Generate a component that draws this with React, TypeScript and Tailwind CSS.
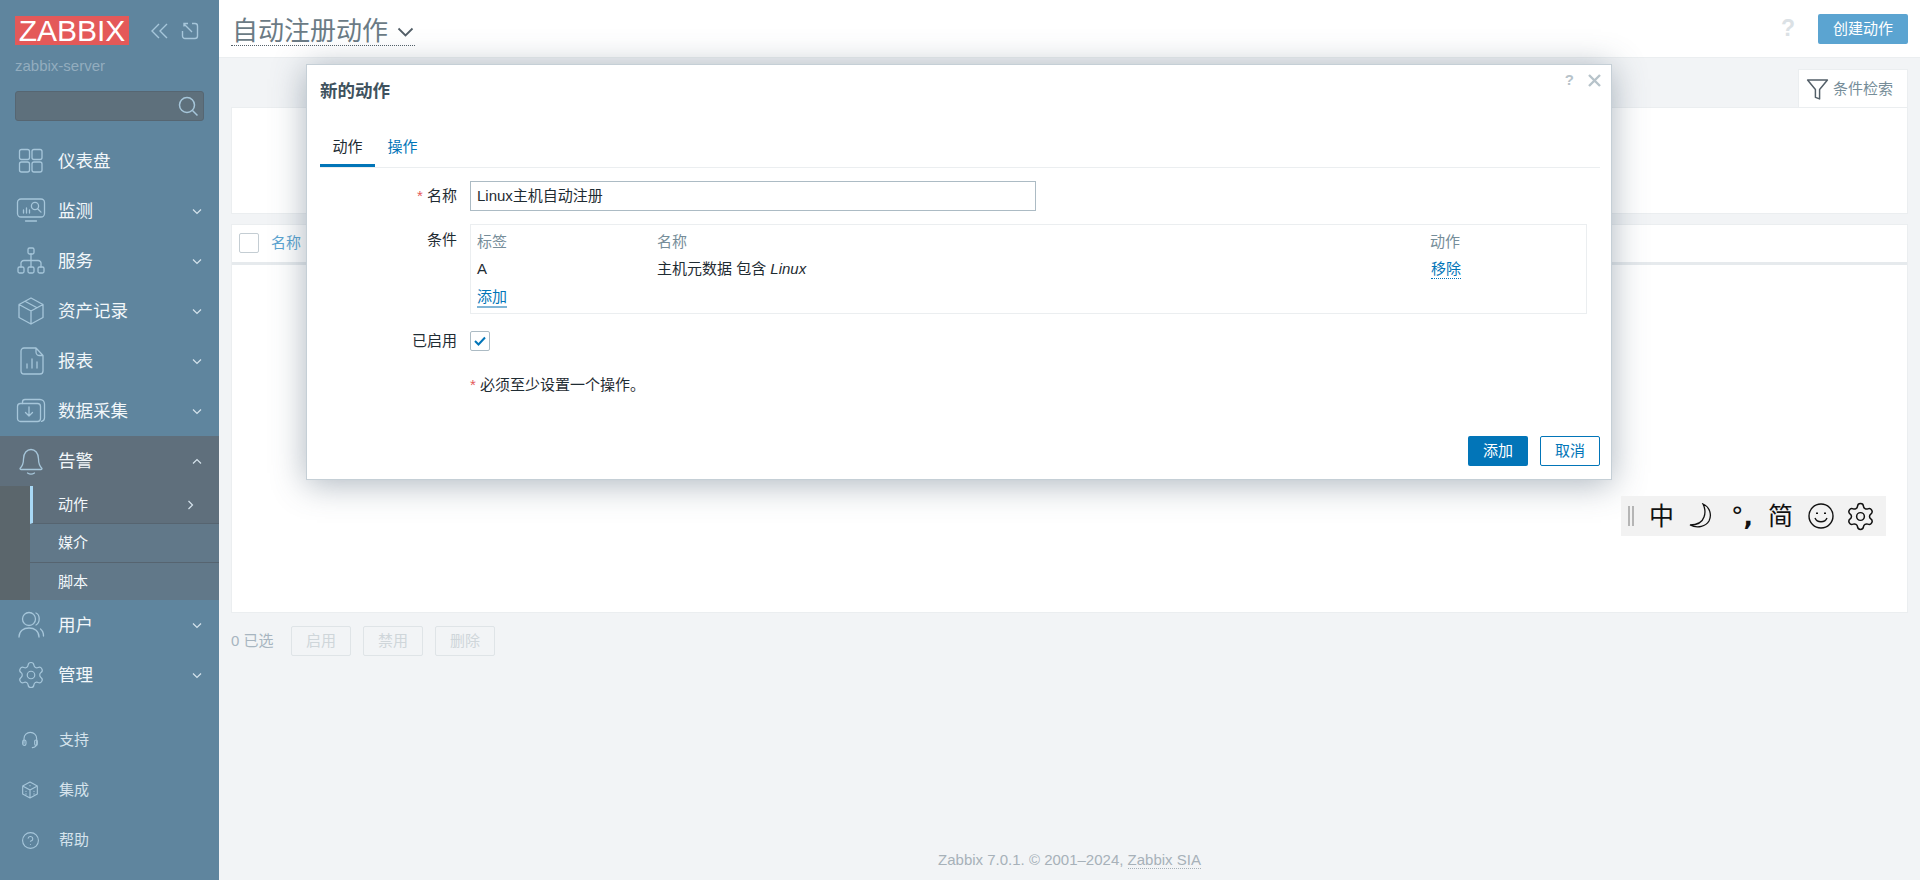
import React from "react";
import { Settings, CircleHelp } from "lucide-react";

const S = "#a6c6da";

const Svg = ({ children, size = 30, color = S, sw = 1.3 }: { children: React.ReactNode; size?: number; color?: string; sw?: number }) => (
  <svg width={size} height={size} viewBox="0 0 30 30" fill="none" stroke={color} strokeWidth={sw} strokeLinecap="round" strokeLinejoin="round">
    {children}
  </svg>
);

const IDash = () => (
  <Svg>
    <rect x="3.5" y="3.5" width="10" height="10" rx="2" />
    <rect x="16" y="3.5" width="10" height="10" rx="2" />
    <rect x="3.5" y="16" width="10" height="10" rx="2" />
    <rect x="16" y="16" width="10" height="10" rx="2" />
  </Svg>
);
const IMonitor = () => (
  <Svg>
    <rect x="1.5" y="3" width="27" height="18" rx="3.5" />
    <path d="M7.500 17v-3M10.500 17v-5M13.500 17v-3M9.5 25h11" />
    <circle cx="19" cy="10" r="3.6" />
    <path d="M21.6 12.700l3.400 3.400" />
  </Svg>
);
const IService = () => (
  <Svg>
    <rect x="12" y="2" width="6" height="6" rx="1.5" />
    <path d="M15 8v13M5 21v-3a3 3 0 0 1 3-3.5h14a3 3 0 0 1 3 3.5v3" />
    <rect x="2" y="21" width="6" height="6" rx="1.5" />
    <rect x="12" y="21" width="6" height="6" rx="1.5" />
    <rect x="22" y="21" width="6" height="6" rx="1.5" />
  </Svg>
);
const IBox = () => (
  <Svg>
    <path d="M15 2l12 6.5v13L15 28 3 21.5v-13zM3 8.5L15 15l12-6.5M15 15v13M9 5.2l12 6.5" />
  </Svg>
);
const IReport = () => (
  <Svg>
    <path d="M8 2h12l7 7.5V25a3 3 0 0 1-3 3H8a3 3 0 0 1-3-3V5a3 3 0 0 1 3-3zM20 2v4a3.5 3.5 0 0 0 3.5 3.5H27" />
    <path d="M11 22v-4M16 22v-9M21 22v-6" />
  </Svg>
);
const IData = () => (
  <Svg>
    <rect x="1.5" y="7.5" width="23" height="18" rx="3" />
    <path d="M6.5 7.5V6a2.5 2.5 0 0 1 2.5-2.5h15a4.5 4.5 0 0 1 4.5 4.5v14a3.5 3.5 0 0 1-3 3.3" />
    <path d="M13 11v9M9.5 16.5L13 20l3.5-3.5" />
  </Svg>
);
const IBell = () => (
  <Svg>
    <path d="M4 22.5c2.5-2.5 3.5-5 3.5-9.5 0-6 3.5-9.5 7.5-9.5s7.5 3.500 7.500 9.500c0 4.500 1 7 3.500 9.500 0 .5-.5 1-1 1H5c-.5 0-1-.5-1-1z" />
    <path d="M11.500 27c2 1.300 5 1.300 7 0" />
  </Svg>
);
const IUsers = () => (
  <Svg>
    <circle cx="13" cy="9" r="6.500" />
    <path d="M3 27c0-6 4.500-9 10-9s10 3 10 9M20 3c4 1.500 4.500 9.500 0 12M24.500 19c2 1.500 3 4 3 7" />
  </Svg>
);
const IHead = () => (
  <Svg size={20} sw={1.7}>
    <path d="M6 20V13a9.500 9.500 0 0 1 19 0v7M25 21c0 3-3 5-6.500 5.500" />
    <rect x="4" y="15" width="5" height="8" rx="2.500" />
    <rect x="22" y="15" width="4" height="8" rx="2" />
  </Svg>
);
const ICube = () => (
  <Svg size={20} sw={1.7}>
    <path d="M15 3l11 6v12l-11 6-11-6V9zM4 9l11 6 11-6M15 15v12" />
    <path d="M15 8.500h.01M9 17h.01M21 17h.01M9 21h.01M21 21h.01" strokeWidth="2" />
  </Svg>
);

const Chevron = ({ up }: { up?: boolean }) => (
  <svg width="10" height="7" viewBox="0 0 10 7" fill="none" stroke="#d5e3ec" strokeWidth="1.2">
    <path d={up ? "M1 5.500L5 1.500l4 4" : "M1 1.500l4 4 4-4"} />
  </svg>
);

const items: [string, React.ReactNode, boolean][] = [
  ["仪表盘", <IDash />, false],
  ["监测", <IMonitor />, true],
  ["服务", <IService />, true],
  ["资产记录", <IBox />, true],
  ["报表", <IReport />, true],
  ["数据采集", <IData />, true],
];

const MenuItem = ({ label, icon, chevron, up, active }: { label: string; icon: React.ReactNode; chevron: boolean; up?: boolean; active?: boolean }) => (
  <div className={`flex h-[50px] items-center pl-[16px] pr-[17px] ${active ? "bg-[#5f6f7c]" : ""}`}>
    <div className="flex h-[30px] w-[30px] items-center justify-center">{icon}</div>
    <span className="ml-[12px] flex-1 text-[17.500px] text-[#f2f7fa]">{label}</span>
    {chevron && <Chevron up={up} />}
  </div>
);

const Sidebar = () => (
  <aside className="flex h-[880px] w-[219px] shrink-0 flex-col bg-[#5f859e]">
    <div className="flex items-center pl-[15px] pt-[16px]">
      <div className="flex h-[29px] w-[114px] items-center justify-center bg-[#e45959] text-[30px] leading-none text-white">ZABBIX</div>
      <svg className="ml-[21px]" width="19" height="16" viewBox="0 0 19 16" fill="none" stroke={S} strokeWidth="1.400">
        <path d="M9 1L2 8l7 7M17 1l-7 7 7 7" />
      </svg>
      <svg className="ml-[12px]" width="18" height="18" viewBox="0 0 18 18" fill="none" stroke={S} strokeWidth="1.400">
        <path d="M7 1.500H3v3M3 2l8 8M11 1.500h3a2.500 2.500 0 0 1 2.500 2.500v10a2.500 2.500 0 0 1-2.500 2.500H4A2.500 2.500 0 0 1 1.500 14V9" />
      </svg>
    </div>
    <div className="ml-[15px] mt-[12px] text-[15px] leading-[18px] text-[#93adbf]">zabbix-server</div>
    <div className="ml-[15px] mt-[16px] flex h-[30px] w-[189px] items-center justify-end rounded-[3px] border border-[#566672] bg-[#5e707c] pr-[4px]">
      <svg width="21" height="21" viewBox="0 0 21 21" fill="none" stroke={S} strokeWidth="1.500">
        <circle cx="9" cy="9" r="7.500" />
        <path d="M14.500 14.500l5 5" />
      </svg>
    </div>
    <div className="mt-[15px]">
      {items.map(([l, i, c]) => (
        <MenuItem key={l} label={l} icon={i} chevron={c} />
      ))}
      <MenuItem label="告警" icon={<IBell />} chevron up active />
      <div className="flex h-[114px] bg-[#5b666c] pl-[30px]">
        <div className="flex-1 text-[15px] text-[#f2f7fa]">
          <div className="flex h-[38px] items-center justify-between border-b border-b-[#566470] border-l-[3px] border-l-[#a8d8f5] bg-[#5f6f7c] pl-[25px] pr-[25px] pt-[1px]">
            <span>动作</span>
            <svg width="7" height="10" viewBox="0 0 7 10" fill="none" stroke="#d5e3ec" strokeWidth="1.200">
              <path d="M1.500 1l4 4-4 4" />
            </svg>
          </div>
          <div className="flex h-[39px] items-center border-b border-[#566470] bg-[#617889] pl-[28px] pt-[1px]">媒介</div>
          <div className="flex h-[37px] items-center bg-[#617889] pl-[28px] pt-[1px]">脚本</div>
        </div>
      </div>
      <MenuItem label="用户" icon={<IUsers />} chevron />
      <MenuItem label="管理" icon={<Settings size={32} color={S} strokeWidth={0.95} />} chevron />
    </div>
    <div className="mt-[15px] text-[15px] text-[#d5e3ec]">
      {[
        ["支持", <IHead />],
        ["集成", <ICube />],
        ["帮助", <CircleHelp size={19} color={S} strokeWidth={1.400} />],
      ].map(([l, i]) => (
        <div key={l as string} className="flex h-[50px] items-center pl-[20px]">
          <div className="flex w-[20px] justify-center">{i}</div>
          <span className="ml-[19px]">{l}</span>
        </div>
      ))}
    </div>
  </aside>
);

const Main = () => (
  <main className="flex h-[880px] flex-1 flex-col">
    <header className="flex h-[58px] shrink-0 items-center justify-between border-b border-[#ebeef0] bg-white pl-[12px] pr-[12px]">
      <div className="flex items-center border-b border-dotted border-[#535f68] pl-[1px] pr-[1px] pt-[6px] text-[26px] leading-[28px] text-[#6b7b85]">
        自动注册动作
        <svg className="ml-[9px] mt-[2px]" width="17" height="11" viewBox="0 0 17 11" fill="none" stroke="#535f68" strokeWidth="1.800">
          <path d="M1.500 1.500l7 7 7-7" />
        </svg>
      </div>
      <div className="flex items-center">
        <span className="mr-[23px] text-[23px] font-bold text-[#dbe1e5]">?</span>
        <div className="mt-[1px] flex h-[30px] w-[90px] items-center justify-center rounded-[2px] bg-[#5ba4d1] text-[15px] text-white">创建动作</div>
      </div>
    </header>
    <div className="flex flex-1 flex-col px-[12px]">
      <div className="flex justify-end pt-[11px]">
        <div className="mb-[-1px] flex h-[39px] w-[110px] items-center border border-b-0 border-[#ebeef0] bg-white pl-[7px] text-[15px] text-[#768d99]">
          <svg width="23" height="23" viewBox="0 0 22 22" fill="none" stroke="#535f68" strokeWidth="1.400" strokeLinejoin="round">
            <path d="M1.500 2h19l-7.500 9v9l-4-1.500V11z" />
          </svg>
          <span className="ml-[4px]">条件检索</span>
        </div>
      </div>
      <div className="h-[107px] border border-[#ebeef0] bg-white" />
      <div className="mt-[10px] h-[389px] border border-[#ebeef0] bg-white">
        <div className="flex h-[40px] items-center border-b-[3px] border-[#e6eaed] pb-[1px] pl-[7px]">
          <div className="h-[20px] w-[20px] rounded-[2px] border border-[#c4cdd3] bg-white" />
          <span className="ml-[12px] text-[15px] text-[#5ba4d1]">名称</span>
        </div>
      </div>
      <div className="mt-[13px] flex items-center text-[15px]">
        <span className="w-[60px] text-[#a7b5c0]">0 已选</span>
        {["启用", "禁用", "删除"].map((t) => (
          <div key={t} className="mr-[12px] flex h-[30px] w-[60px] items-center justify-center rounded-[2px] border border-[#dfe4e7] bg-[#f2f4f6] text-[#cfd6da]">
            {t}
          </div>
        ))}
      </div>
      <footer className="mt-auto pb-[11px] text-center text-[15px] leading-[18px] text-[#a7b1b9]">
        Zabbix 7.0.1. © 2001–2024, <span className="border-b border-dotted border-[#a7b1b9]">Zabbix SIA</span>
      </footer>
    </div>
  </main>
);

const Dialog = () => (
  <div className="absolute left-[306px] top-[64px] flex h-[416px] w-[1306px] flex-col border border-[#c5cfd6] bg-white px-[13px] text-[15px] text-[#1f2c33] shadow-[0_4px_32px_rgba(70,90,110,0.45)]">
    <div className="flex h-[52px] shrink-0 items-center text-[17.500px] font-bold text-[#3f525e]">新的动作</div>
    <div className="absolute right-[10px] top-[4px] flex items-center gap-[14px] font-bold text-[#b7c3ca]">
      <span className="text-[15px]">?</span>
      <svg width="13" height="13" viewBox="0 0 13 13" stroke="#b7c3ca" strokeWidth="2.400">
        <path d="M1 1l11 11M12 1L1 12" />
      </svg>
    </div>
    <div className="mr-[-2px] flex h-[51px] shrink-0 items-end border-b border-[#ebeef0]">
      <div className="flex h-[37px] w-[55px] items-center justify-center border-b-[3px] border-[#0275b8]">动作</div>
      <div className="flex h-[37px] w-[55px] items-center justify-center pb-[3px] text-[#0275b8]">操作</div>
    </div>
    <div className="mt-[13px] flex items-center">
      <label className="w-[137px] text-right">
        <span className="text-[#e45959]">*</span> 名称
      </label>
      <div className="ml-[13px] flex h-[30px] w-[566px] items-center border border-[#acbbc4] pl-[6px]">Linux主机自动注册</div>
    </div>
    <div className="mt-[13px] flex">
      <label className="w-[137px] pt-[5px] text-right">条件</label>
      <div className="ml-[13px] grid h-[90px] w-[1117px] grid-cols-[180px_773px_1fr] grid-rows-[26px_27px_26px] border border-[#ebeef0] pl-[6px] pt-[4px] leading-[26px]">
        <span className="text-[#768d99]">标签</span>
        <span className="text-[#768d99]">名称</span>
        <span className="text-[#768d99]">动作</span>
        <span className="pt-[1px]">A</span>
        <span className="pt-[1px]">
          主机元数据 包含 <i>Linux</i>
        </span>
        <span className="pl-[1px] pt-[1px]">
          <span className="border-b border-dotted border-[#0275b8] pb-[1px] text-[#0275b8]">移除</span>
        </span>
        <span className="col-span-3 mt-[2px]">
          <span className="border-b-2 border-[#7fb5d6] pb-[1px] text-[#0275b8]">添加</span>
        </span>
      </div>
    </div>
    <div className="mt-[15px] flex items-center">
      <label className="w-[137px] pt-[1px] text-right">已启用</label>
      <div className="ml-[13px] flex h-[20px] w-[20px] items-center justify-center rounded-[2px] border border-[#acbbc4]">
        <svg width="12" height="10" viewBox="0 0 12 10" fill="none" stroke="#0275b8" strokeWidth="2">
          <path d="M1 5l3.500 3.500L11 1.500" />
        </svg>
      </div>
    </div>
    <div className="ml-[150px] mt-[21px]">
      <span className="text-[#e45959]">*</span> 必须至少设置一个操作。
    </div>
    <div className="mr-[-2px] mt-auto flex justify-end gap-[12px] pb-[13px]">
      <div className="flex h-[30px] w-[60px] items-center justify-center rounded-[2px] bg-[#0275b8] text-white">添加</div>
      <div className="flex h-[30px] w-[60px] items-center justify-center rounded-[2px] border border-[#0275b8] text-[#0275b8]">取消</div>
    </div>
  </div>
);

const Ime = () => (
  <div className="absolute left-[1621px] top-[496px] flex h-[40px] w-[265px] items-center bg-[#f2f2f2] pl-[7px] text-[#111]">
    <div className="h-[20px] w-[6px] border-x-2 border-[#b5b5b5]" />
    <span className="ml-[15px] w-[40px] text-[25px] leading-none">中</span>
    <svg className="ml-[-1px]" width="26" height="26" viewBox="0 0 26 26" fill="none" stroke="#111" strokeWidth="1.300">
      <path d="M15 1c7 3 9 11 6 17-3 5-11 8-19 4 7 0 12-2 14-8 1.500-4 1-9-1-13z" />
    </svg>
    <span className="ml-[17px] w-[24px] font-['DejaVu_Sans'] text-[25px] leading-none">
      °<b>,</b>
    </span>
    <span className="ml-[13px] w-[40px] text-[25px] leading-none">简</span>
    <svg width="26" height="26" viewBox="0 0 26 26" fill="none" stroke="#111" strokeWidth="1.400">
      <circle cx="13" cy="13" r="12" />
      <path d="M7 15c2 5 10 5 12 0" />
      <path d="M9 9.500v1.500M17 9.500v1.500" strokeWidth="2" />
    </svg>
    <div className="ml-[11px]">
      <Settings size={31} color="#111" strokeWidth={1.150} />
    </div>
  </div>
);

export default function App() {
  return (
    <div className="relative flex h-[880px] w-[1920px] overflow-hidden bg-[#f2f4f6] font-['Liberation_Sans','Noto_Sans_CJK_SC',sans-serif]">
      <Sidebar />
      <Main />
      <Dialog />
      <Ime />
    </div>
  );
}
